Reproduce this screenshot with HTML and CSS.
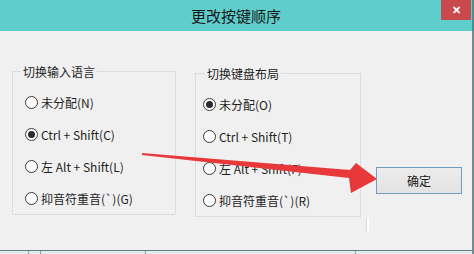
FILE: index.html
```html
<!DOCTYPE html>
<html lang="zh-CN">
  <head>
    <meta charset="UTF-8" />
    <title>更改按键顺序</title>
    <link rel="stylesheet" href="styles.css">
  </head>
  <body>
    <div class="window">
      <div class="titlebar">
        <span class="title">更改按键顺序</span>
        <button class="close">&#x2715;</button>
      </div>

      <div class="content">
        <fieldset class="group group-lang">
          <legend>切换输入语言</legend>
          <label class="option"><input type="radio" name="lang" /> 未分配(N)</label>
          <label class="option"><input type="radio" name="lang" checked /> Ctrl + Shift(C)</label>
          <label class="option"><input type="radio" name="lang" /> 左 Alt + Shift(L)</label>
          <label class="option"><input type="radio" name="lang" /> 抑音符重音(`)(G)</label>
        </fieldset>

        <fieldset class="group group-layout">
          <legend>切换键盘布局</legend>
          <label class="option"><input type="radio" name="layout" checked /> 未分配(O)</label>
          <label class="option"><input type="radio" name="layout" /> Ctrl + Shift(T)</label>
          <label class="option"><input type="radio" name="layout" /> 左 Alt + Shift(F)</label>
          <label class="option"><input type="radio" name="layout" /> 抑音符重音(`)(R)</label>
        </fieldset>

        <div class="actions">
          <button class="ok">确定</button>
          <span class="edge"></span>
        </div>

        <!-- annotation arrow drawn over the dialog -->
        <svg class="arrow" width="474" height="254" viewBox="0 0 474 254">
          <polygon points="142,153 350,170 356,163 377,179 351,193 349,178 142,155" fill="#e8383a" />
        </svg>
      </div>

      <!-- strip of the window behind the dialog -->
      <div class="behind">
        <span class="cell c1"></span>
        <span class="cell c2"></span>
        <span class="cell c3"></span>
        <span class="cell c4"></span>
      </div>
    </div>
  </body>
</html>
```

FILE: styles.css
```css
body {
  margin: 0;
  padding: 0;
  font-family: "Noto Sans CJK SC", "Noto Sans", sans-serif;
  background: #f0f0f0;
  overflow: hidden;
}
.window {
  width: 474px;
  height: 254px;
  position: relative;
  overflow: hidden;
}
.titlebar {
  height: 31px;
  background: #5fcdcb;
  display: flex;
  justify-content: center;
  align-items: center;
  position: relative;
  border-right: 2px solid #4a8f8e;
  box-sizing: border-box;
}
.title {
  font-size: 15px;
  color: #1a1a1a;
  margin-top: -1px;
}
.close {
  position: absolute;
  top: 0;
  right: 1px;
  width: 30px;
  height: 20px;
  border: none;
  background: #c9494d;
  color: #fff;
  font-size: 11px;
  font-weight: bold;
  padding: 0;
}
.content {
  height: 219px;
  background: #f0f0f0;
  display: flex;
  align-items: flex-start;
  padding: 32px 0 0 12px;
  box-sizing: border-box;
  border-right: 2px solid #6e8e90;
  position: relative;
}
.group {
  margin: 0;
  padding: 6px 0 0 12px;
  border: 1px solid #dcdcdc;
  height: 152px;
  box-sizing: border-box;
  display: flex;
  flex-direction: column;
}
.group-lang {
  width: 164px;
}
.group-layout {
  width: 166px;
  margin-left: 19px;
  margin-top: 2px;
  padding-left: 7px;
}
legend {
  font-size: 12px;
  color: #1e1e1e;
  padding: 0 2px;
  margin-left: -4px;
  line-height: 17px;
}
.group-layout legend {
  margin-left: 2px;
}
.option {
  display: flex;
  align-items: center;
  height: 33px;
  font-size: 12px;
  color: #1e1e1e;
}
.option input {
  appearance: none;
  -webkit-appearance: none;
  width: 13px;
  height: 13px;
  margin: 0 3px 0 0;
  border: 1px solid #3c3c3c;
  border-radius: 50%;
  background: #fff;
  box-sizing: border-box;
  display: grid;
  place-items: center;
}
.option input:checked::after {
  content: "";
  width: 7px;
  height: 7px;
  border-radius: 50%;
  background: #2b2b2b;
}
.actions {
  margin-left: 15px;
  padding-top: 104px;
  display: flex;
  flex-direction: column;
}
.ok {
  width: 86px;
  height: 27px;
  border: 1px solid #6c9fc2;
  background: linear-gradient(#ececec, #e2e2e2);
  font-family: "Noto Sans CJK SC", sans-serif;
  font-size: 12px;
  color: #1a1a1a;
  padding: 0;
}
.edge {
  width: 2px;
  height: 14px;
  margin: 24px 0 0 -10px;
  background: #ffffff;
  border-left: 1px solid #dadada;
}
.arrow {
  position: absolute;
  top: -31px;
  left: 0;
  pointer-events: none;
}
.behind {
  height: 4px;
  border-top: 1px solid #5d7c80;
  border-right: 2px solid #6e8e90;
  background: #e4eaee;
  position: relative;
  overflow: hidden;
}
.cell {
  position: absolute;
  top: 0;
  height: 4px;
  border-left: 1px solid #8a9aa2;
  border-bottom: 1px solid #9aa6ac;
}
.c1 {
  left: 28px;
  width: 8px;
}
.c2 {
  left: 40px;
  width: 90px;
  border-bottom: 2px dotted #555;
}
.c3 {
  left: 145px;
  width: 95px;
  border-bottom: 2px dotted #555;
}
.c4 {
  left: 355px;
  width: 70px;
  border-bottom: 2px dotted #555;
}
```
